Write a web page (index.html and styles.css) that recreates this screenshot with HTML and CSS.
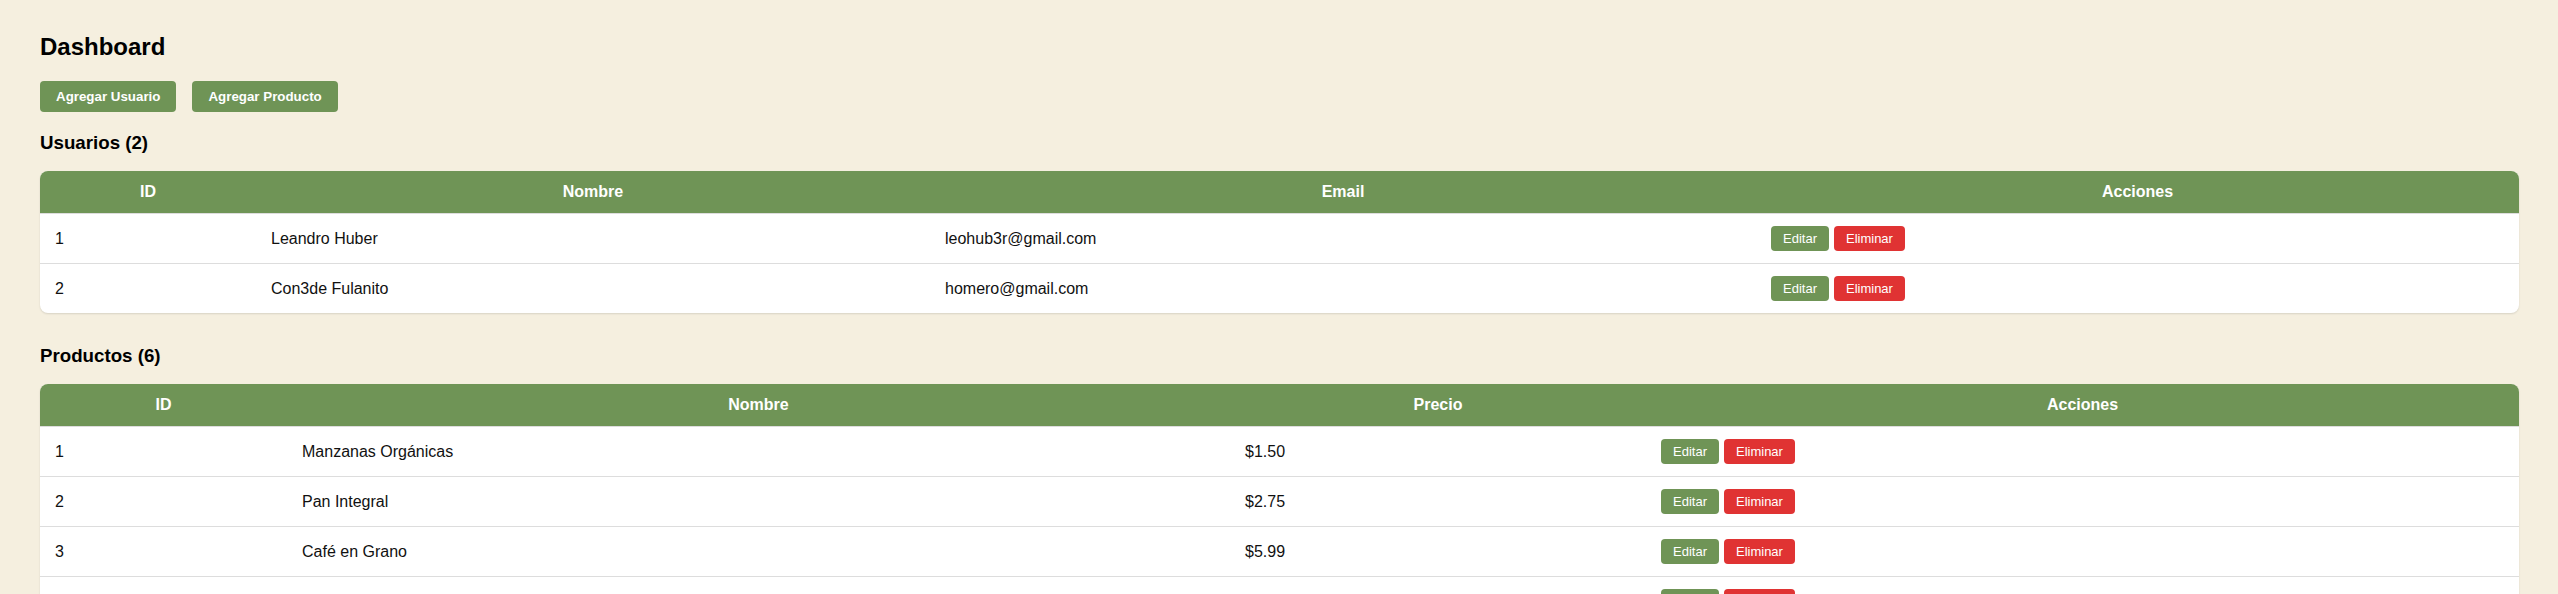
FILE: index.html
```html
<!DOCTYPE html>
<html lang="es">
<head>
<meta charset="utf-8">
<title>Dashboard</title>
<link rel="stylesheet" href="styles.css">
</head>
<body>
<div class="dashboard">
  <h2 class="title">Dashboard</h2>
  <div class="actions">
    <button class="btn btn-primary">Agregar Usuario</button>
    <button class="btn btn-primary">Agregar Producto</button>
  </div>

  <section class="section">
    <h3 class="section-title">Usuarios (2)</h3>
    <div class="table-card">
      <table class="data-table">
        <colgroup>
          <col class="u-id"><col class="u-name"><col class="u-email"><col class="u-actions">
        </colgroup>
        <thead>
          <tr><th>ID</th><th>Nombre</th><th>Email</th><th>Acciones</th></tr>
        </thead>
        <tbody>
          <tr>
            <td>1</td><td>Leandro Huber</td><td>leohub3r@gmail.com</td>
            <td><div class="row-actions"><button class="btn-sm btn-edit">Editar</button><button class="btn-sm btn-delete">Eliminar</button></div></td>
          </tr>
          <tr>
            <td>2</td><td>Con3de Fulanito</td><td>homero@gmail.com</td>
            <td><div class="row-actions"><button class="btn-sm btn-edit">Editar</button><button class="btn-sm btn-delete">Eliminar</button></div></td>
          </tr>
        </tbody>
      </table>
    </div>
  </section>

  <section class="section">
    <h3 class="section-title">Productos (6)</h3>
    <div class="table-card">
      <table class="data-table">
        <colgroup>
          <col class="p-id"><col class="p-name"><col class="p-price"><col class="p-actions">
        </colgroup>
        <thead>
          <tr><th>ID</th><th>Nombre</th><th>Precio</th><th>Acciones</th></tr>
        </thead>
        <tbody>
          <tr>
            <td>1</td><td>Manzanas Orgánicas</td><td>$1.50</td>
            <td><div class="row-actions"><button class="btn-sm btn-edit">Editar</button><button class="btn-sm btn-delete">Eliminar</button></div></td>
          </tr>
          <tr>
            <td>2</td><td>Pan Integral</td><td>$2.75</td>
            <td><div class="row-actions"><button class="btn-sm btn-edit">Editar</button><button class="btn-sm btn-delete">Eliminar</button></div></td>
          </tr>
          <tr>
            <td>3</td><td>Café en Grano</td><td>$5.99</td>
            <td><div class="row-actions"><button class="btn-sm btn-edit">Editar</button><button class="btn-sm btn-delete">Eliminar</button></div></td>
          </tr>
          <tr>
            <td>4</td><td>Miel Natural</td><td>$4.20</td>
            <td><div class="row-actions"><button class="btn-sm btn-edit">Editar</button><button class="btn-sm btn-delete">Eliminar</button></div></td>
          </tr>
          <tr>
            <td>5</td><td>Queso de Cabra</td><td>$7.80</td>
            <td><div class="row-actions"><button class="btn-sm btn-edit">Editar</button><button class="btn-sm btn-delete">Eliminar</button></div></td>
          </tr>
          <tr>
            <td>6</td><td>Leche de Almendras</td><td>$3.40</td>
            <td><div class="row-actions"><button class="btn-sm btn-edit">Editar</button><button class="btn-sm btn-delete">Eliminar</button></div></td>
          </tr>
        </tbody>
      </table>
    </div>
  </section>
</div>
</body>
</html>
```

FILE: styles.css
```css
* {
  box-sizing: border-box;
}

body {
  margin: 0;
  background: #f5efdf;
  font-family: "Liberation Sans", Arial, sans-serif;
  color: #000;
}

.dashboard {
  padding: 13px 39px 0 40px;
}

.title {
  font-size: 24px;
  font-weight: bold;
  margin: 20px 0;
}

.actions {
  display: flex;
  gap: 16px;
  margin-bottom: 20px;
}

.btn {
  font-family: inherit;
  font-size: 13.333px;
  font-weight: bold;
  border: none;
  border-radius: 4px;
  padding: 8px 16px;
  cursor: pointer;
}

.btn-primary {
  background: #6f9456;
  color: #fff;
}

.section {
  margin-bottom: 32px;
}

.section-title {
  font-size: 18.72px;
  font-weight: bold;
  margin: 18.72px 0 17px;
}

.table-card {
  background: #fff;
  border-radius: 8px;
  overflow: hidden;
  box-shadow: 0 1px 2px rgba(0, 0, 0, 0.12);
}

.data-table {
  width: 100%;
  border-collapse: collapse;
  table-layout: fixed;
}

.u-id { width: 216px; }
.u-name { width: 674px; }
.u-email { width: 826px; }
.u-actions { width: auto; }

.p-id { width: 247px; }
.p-name { width: 943px; }
.p-price { width: 416px; }
.p-actions { width: auto; }

.data-table th {
  background: #6f9456;
  color: #fff;
  font-size: 16px;
  font-weight: bold;
  text-align: center;
  padding: 12px 15px;
  border-bottom: 1px solid #ddd;
}

.data-table td {
  font-size: 16px;
  text-align: left;
  padding: 12px 15px;
  border-bottom: 1px solid #ddd;
  color: #111;
}

.data-table tbody tr:last-child td {
  border-bottom: none;
}

.row-actions {
  display: flex;
  gap: 5px;
}

.btn-sm {
  font-family: inherit;
  font-size: 13px;
  border: none;
  border-radius: 4px;
  padding: 5px 12px;
  color: #fff;
  cursor: pointer;
}

.btn-edit {
  background: #6f9456;
}

.btn-delete {
  background: #e03333;
}
```
